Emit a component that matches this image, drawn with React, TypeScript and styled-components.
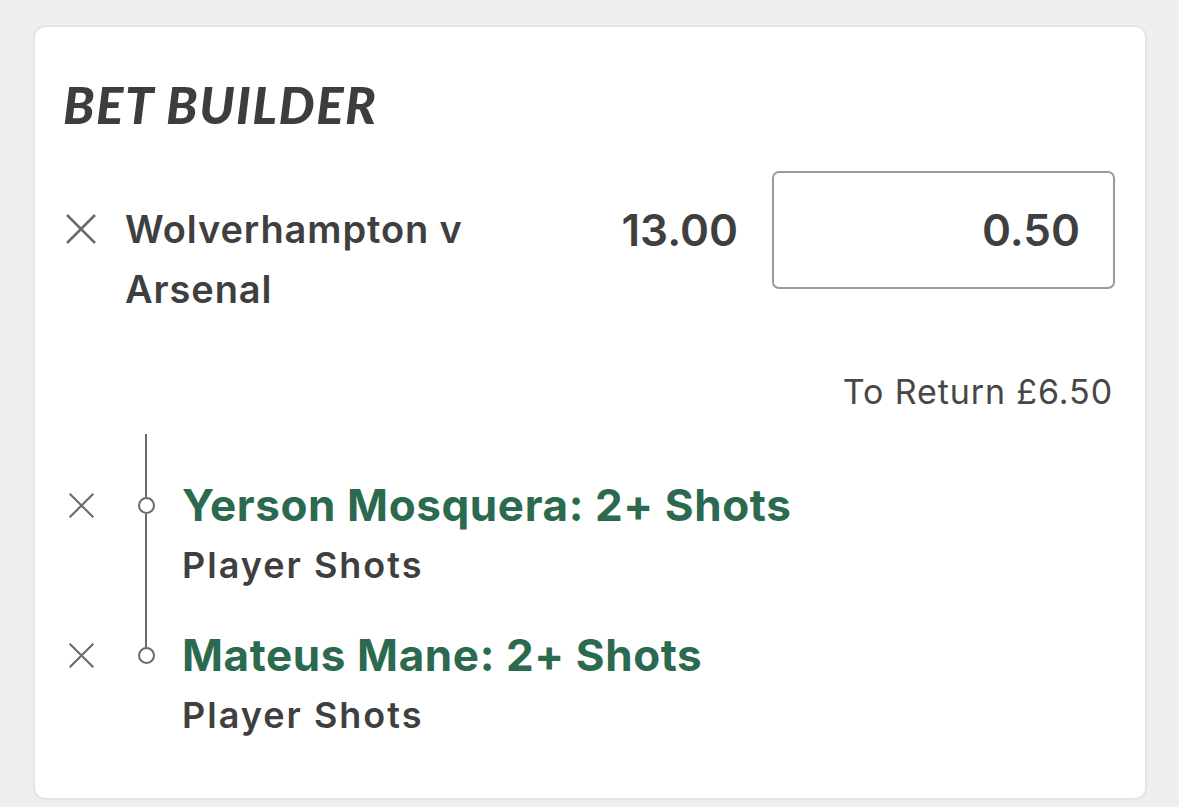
import styled, { createGlobalStyle } from "styled-components";

const GlobalStyle = createGlobalStyle`
  html, body {
    margin: 0;
    padding: 0;
    background: #efefef;
  }
  body {
    font-family: Inter, "Noto Sans", "Liberation Sans", sans-serif;
    color: #3f3f3f;
  }
`;

const Page = styled.div`
  width: 1179px;
  height: 807px;
  padding: 25px 32px 7px 33px;
  box-sizing: border-box;
`;

const Card = styled.section`
  height: 100%;
  box-sizing: border-box;
  background: #fff;
  border: 2px solid #e4e4e4;
  border-radius: 12px;
  padding: 0 30px 0 28px;
`;

const Title = styled.h1`
  margin: 0;
  padding-top: 42px;
  font-family: Lato, "Liberation Sans", sans-serif;
  font-style: italic;
  font-weight: 900;
  font-size: 51px;
  line-height: 72px;
  letter-spacing: 1.5px;
  color: #3d3d3d;
`;

const MatchRow = styled.div`
  display: flex;
  align-items: flex-start;
  margin-top: 30px;
`;

const CloseButton = styled.button<{ $size: number; $top?: number }>`
  flex: none;
  width: 36px;
  height: 60px;
  margin-top: ${(p) => p.$top ?? 0}px;
  padding: 0;
  border: 0;
  background: none;
  display: flex;
  align-items: center;
  justify-content: center;
  color: #6a6a6a;

  svg {
    width: ${(p) => p.$size}px;
    height: ${(p) => p.$size}px;
  }
`;

const MatchName = styled.div`
  flex: 1;
  margin: 28px 0 0 26px;
  font-size: 38px;
  font-weight: 600;
  line-height: 60px;
  letter-spacing: 0.9px;
  color: #3f3f3f;
`;

const Odds = styled.div`
  flex: none;
  margin-right: 34px;
  line-height: 118px;
  font-size: 44px;
  font-weight: 600;
  color: #3f3f3f;
`;

const StakeBox = styled.div`
  flex: none;
  width: 343px;
  height: 118px;
  box-sizing: border-box;
  border: 2px solid #9a9a9a;
  border-radius: 7px;
  display: flex;
  align-items: center;
  justify-content: flex-end;
  padding-right: 33px;
  font-size: 44px;
  font-weight: 600;
  color: #3f3f3f;
`;

const ReturnLine = styled.div`
  margin-top: 53px;
  padding-right: 2px;
  text-align: right;
  font-size: 34px;
  line-height: 40px;
  letter-spacing: 0.9px;
  color: #474747;
`;

const Legs = styled.div`
  margin-top: 22px;
`;

const Leg = styled.div`
  display: flex;
  align-items: stretch;
`;

const Rail = styled.div<{ $reach: number; $last?: boolean }>`
  flex: none;
  width: 32px;
  margin: 0 20px 0 31px;
  display: flex;
  flex-direction: column;
  align-items: center;

  &::before {
    content: "";
    width: 2px;
    height: ${(p) => p.$reach}px;
    background: #6a6a6a;
  }

  &::after {
    content: "";
    flex: 1;
    width: 2px;
    background: ${(p) => (p.$last ? "transparent" : "#6a6a6a")};
  }
`;

const Node = styled.span`
  flex: none;
  width: 17px;
  height: 17px;
  box-sizing: border-box;
  border: 2px solid #6a6a6a;
  border-radius: 50%;
`;

const LegText = styled.div<{ $top: number; $bottom: number }>`
  flex: 1;
  padding: ${(p) => p.$top}px 0 ${(p) => p.$bottom}px;
`;

const LegTitle = styled.div`
  font-size: 44px;
  font-weight: 700;
  line-height: 60px;
  letter-spacing: 0.6px;
  color: #2c6a4f;
`;

const LegMarket = styled.div`
  font-size: 36px;
  font-weight: 600;
  line-height: 60px;
  letter-spacing: 2px;
  color: #3f3f3f;
`;

const CrossIcon = () => (
  <svg viewBox="0 0 32 32" fill="none" stroke="currentColor" strokeWidth="2.5">
    <path d="M2 2 L30 30 M30 2 L2 30" />
  </svg>
);

const legs = [
  { title: "Yerson Mosquera: 2+ Shots", market: "Player Shots", top: 41, bottom: 30 },
  { title: "Mateus Mane: 2+ Shots", market: "Player Shots", top: 0, bottom: 0 },
];

export default function App() {
  return (
    <>
      <GlobalStyle />
      <Page>
        <Card>
          <Title>BET BUILDER</Title>
          <MatchRow>
            <CloseButton $size={32} $top={28} aria-label="Remove">
              <CrossIcon />
            </CloseButton>
            <MatchName>
              Wolverhampton v<br />
              Arsenal
            </MatchName>
            <Odds>13.00</Odds>
            <StakeBox>0.50</StakeBox>
          </MatchRow>
          <ReturnLine>To Return £6.50</ReturnLine>
          <Legs>
            {legs.map((leg, i) => (
              <Leg key={leg.title}>
                <CloseButton $size={27} $top={leg.top} aria-label="Remove leg">
                  <CrossIcon />
                </CloseButton>
                <Rail $reach={leg.top + 22} $last={i === legs.length - 1}>
                  <Node />
                </Rail>
                <LegText $top={leg.top} $bottom={leg.bottom}>
                  <LegTitle>{leg.title}</LegTitle>
                  <LegMarket>{leg.market}</LegMarket>
                </LegText>
              </Leg>
            ))}
          </Legs>
        </Card>
      </Page>
    </>
  );
}
